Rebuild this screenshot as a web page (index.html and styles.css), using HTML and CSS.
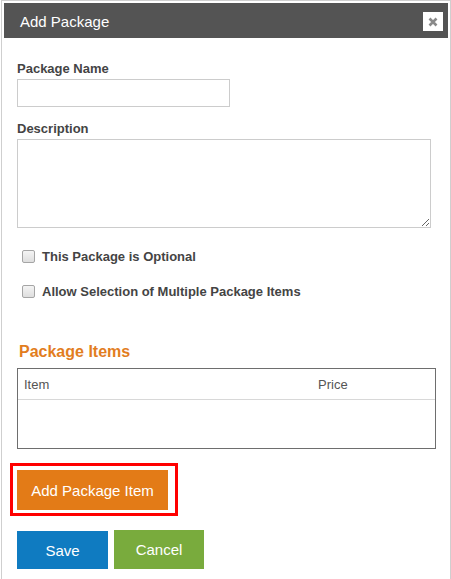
FILE: index.html
```html
<!DOCTYPE html>
<html>
<head>
<meta charset="utf-8">
<link rel="stylesheet" href="styles.css">
</head>
<body>
<div class="dialog">
  <div class="header">
    <span class="title">Add Package</span>
    <span class="close">
      <svg width="10" height="10" viewBox="0 0 10 10"><path d="M1.5 1.5 L8.5 8.5 M8.5 1.5 L1.5 8.5" stroke="#8a8a8a" stroke-width="2.6" stroke-linecap="butt"/></svg>
    </span>
  </div>
  <div class="body">
    <label class="label first">Package Name</label>
    <input class="input name" type="text">
    <label class="label desc">Description</label>
    <textarea class="textarea"></textarea>
    <div class="check first-check"><span class="box"></span><span>This Package is Optional</span></div>
    <div class="check second-check"><span class="box"></span><span>Allow Selection of Multiple Package Items</span></div>
    <div class="section">Package Items</div>
    <div class="table">
      <div class="thead"><span class="col-item">Item</span><span class="col-price">Price</span></div>
      <div class="tbody"></div>
    </div>
    <div class="highlight"><button class="btn orange">Add Package Item</button></div>
    <div class="actions">
      <button class="btn blue">Save</button>
      <button class="btn green">Cancel</button>
    </div>
  </div>
</div>
</body>
</html>
```
FILE: styles.css
```css
html, body {
  margin: 0;
  padding: 0;
  background: #fff;
  font-family: "Liberation Sans", Arial, sans-serif;
}
body {
  padding-left: 1px;
  width: 451px;
  height: 579px;
  overflow: hidden;
  box-sizing: border-box;
}
.dialog {
  width: 450px;
  height: 579px;
  box-sizing: border-box;
  border: 1px solid #cfcfcf;
  border-bottom: none;
  padding: 2px;
  background: #fff;
}
.header {
  height: 35px;
  background: #545454;
  display: flex;
  align-items: center;
  justify-content: space-between;
  padding: 0 5px 0 16px;
}
.title {
  color: #fff;
  font-size: 15px;
  position: relative;
  top: 1px;
}
.close {
  width: 20px;
  height: 19px;
  background: #fff;
  display: flex;
  align-items: center;
  justify-content: center;
  margin-top: 2px;
}
.body {
  padding: 0 13px;
  display: flex;
  flex-direction: column;
  align-items: flex-start;
}
.label {
  display: block;
  font-size: 13px;
  font-weight: bold;
  color: #444;
  line-height: 15px;
}
.label.first { margin-top: 23px; }
.label.desc { margin-top: 14px; }
.input {
  margin: 3px 0 0 0;
  width: 213px;
  height: 28px;
  box-sizing: border-box;
  border: 1px solid #ccc;
  padding: 0;
  outline: none;
}
.textarea {
  margin: 3px 0 0 0;
  width: 414px;
  height: 89px;
  box-sizing: border-box;
  border: 1px solid #ccc;
  padding: 0;
  resize: both;
  outline: none;
  display: block;
}
.check {
  display: flex;
  align-items: center;
  height: 20px;
  font-size: 13px;
  font-weight: bold;
  color: #444;
  padding-left: 5px;
}
.first-check { margin-top: 18px; }
.second-check { margin-top: 15px; }
.box {
  width: 11px;
  height: 11px;
  border: 1px solid #a5a5a5;
  border-radius: 2px;
  background: linear-gradient(#f4f4f4, #dedede);
  margin-right: 7px;
  flex: none;
}
.section {
  margin-top: 42px;
  margin-left: 2px;
  font-size: 16px;
  line-height: 18px;
  font-weight: bold;
  color: #e27d1e;
}
.table {
  margin-top: 7px;
  width: 419px;
  height: 81px;
  box-sizing: border-box;
  border: 1px solid #6e6e6e;
  display: flex;
  flex-direction: column;
}
.thead {
  height: 30px;
  border-bottom: 1px solid #d8d8d8;
  display: flex;
  align-items: center;
  font-size: 13px;
  color: #555;
}
.col-item { width: 294px; padding-left: 6px; }
.tbody { flex: 1; }
.highlight {
  margin-top: 14px;
  margin-left: -7px;
  border: 3px solid #f00;
  padding: 4px 7px 3px 4px;
  display: flex;
}
.btn {
  border: none;
  color: #fff;
  font-family: "Liberation Sans", Arial, sans-serif;
  font-size: 14px;
  padding: 0;
  margin: 0;
}
.orange {
  width: 151px;
  height: 40px;
  background: #e37b17;
  font-size: 15px;
}
.actions {
  margin-top: 14px;
  display: flex;
  gap: 6px;
  align-items: flex-end;
}
.blue {
  width: 91px;
  height: 38px;
  background: #0f7bc1;
  font-size: 15px;
}
.green {
  width: 90px;
  height: 39px;
  background: #79ab3d;
  font-size: 15px;
}
```
